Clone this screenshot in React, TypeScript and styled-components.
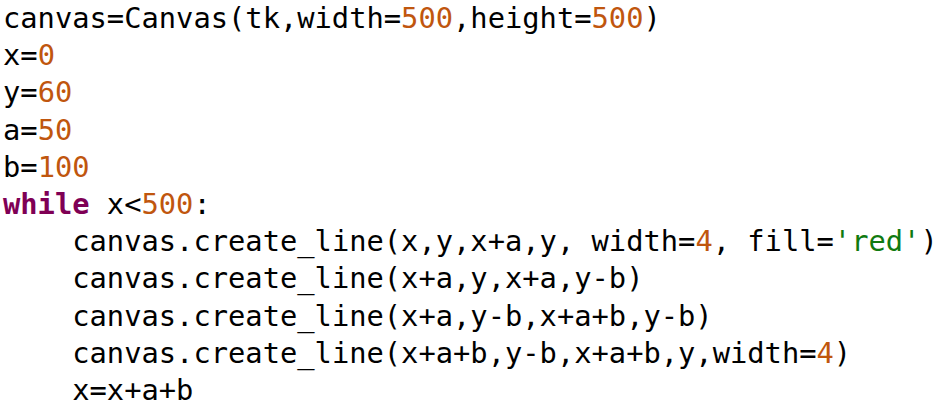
import React from "react";
import styled, { createGlobalStyle } from "styled-components";

const Global = createGlobalStyle`
  html, body { margin: 0; padding: 0; background: #ffffff; }
`;

const Code = styled.pre`
  margin: 0;
  padding: 0 0 0 3px;
  font-family: "DejaVu Sans Mono", "Liberation Mono", monospace;
  font-size: 28.75px;
  line-height: 37.2px;
  color: #000000;
  background: #ffffff;
  white-space: pre;
  width: 940px;
  height: 409px;
  overflow: hidden;
  box-sizing: border-box;
`;

const Line = styled.div`
  height: 37.2px;
`;

const Num = styled.span`
  color: #c0560e;
`;

const Kw = styled.span`
  color: #7f0055;
  font-weight: bold;
`;

const Str = styled.span`
  color: #107a10;
`;

export default function App() {
  return (
    <>
      <Global />
      <Code>
        <Line>
          canvas=Canvas(tk,width=<Num>500</Num>,height=<Num>500</Num>)
        </Line>
        <Line>
          x=<Num>0</Num>
        </Line>
        <Line>
          y=<Num>60</Num>
        </Line>
        <Line>
          a=<Num>50</Num>
        </Line>
        <Line>
          b=<Num>100</Num>
        </Line>
        <Line>
          <Kw>while</Kw> x&lt;<Num>500</Num>:
        </Line>
        <Line>
          {"    "}canvas.create_line(x,y,x+a,y, width=<Num>4</Num>, fill=<Str>'red'</Str>)
        </Line>
        <Line>{"    "}canvas.create_line(x+a,y,x+a,y-b)</Line>
        <Line>{"    "}canvas.create_line(x+a,y-b,x+a+b,y-b)</Line>
        <Line>
          {"    "}canvas.create_line(x+a+b,y-b,x+a+b,y,width=<Num>4</Num>)
        </Line>
        <Line>{"    "}x=x+a+b</Line>
      </Code>
    </>
  );
}
